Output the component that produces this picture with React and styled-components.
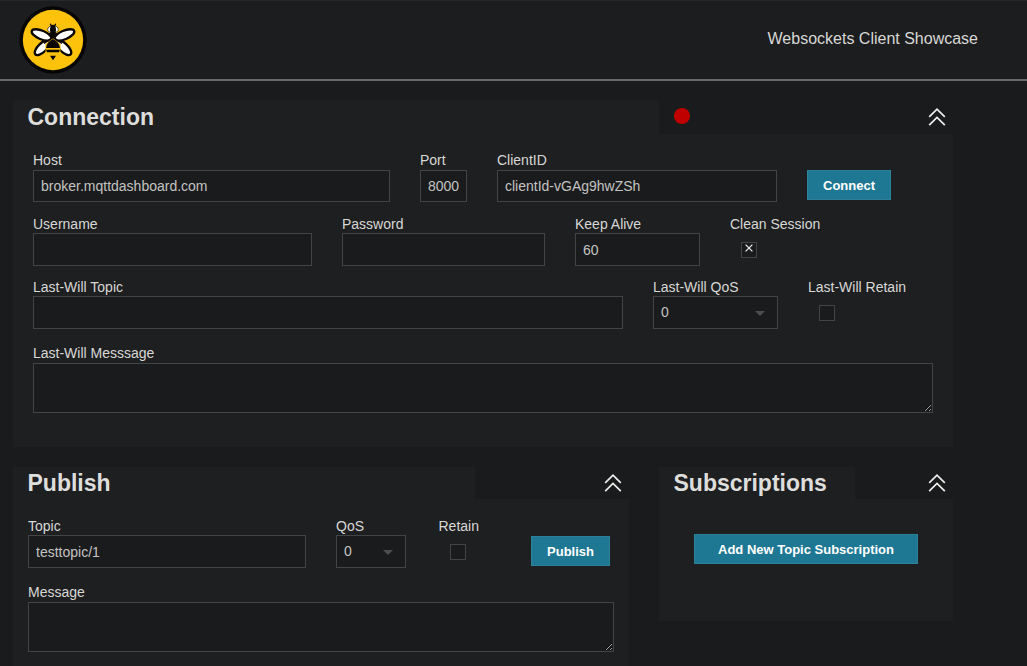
import React from "react";
import styled, { createGlobalStyle } from "styled-components";

const GlobalStyle = createGlobalStyle`
  * { box-sizing: border-box; }
  html, body { margin: 0; height: 666px; overflow: hidden; }
  body {
    background: #1a1b1d;
    color: #d8d8d5;
    font: 14px/20px "Liberation Sans", Arial, sans-serif;
  }
`;

const Header = styled.header`
  display: flex;
  align-items: flex-start;
  justify-content: space-between;
  height: 81px;
  padding: 5px 49px 0 19px;
  background: #1c1d1f;
  border-top: 1px solid #26282a;
  border-bottom: 2px solid #68696b;
`;

const Logo = styled.svg`
  display: block;
  width: 68px;
  height: 68px;
`;

const Tagline = styled.div`
  padding-top: 23px;
  font-size: 16px;
`;

const Main = styled.main`
  display: flex;
  flex-direction: column;
  gap: 20px;
  width: 940px;
  margin: 19px 0 0 13px;
`;

const Columns = styled.div`
  display: flex;
  align-items: flex-start;
  gap: 30px;
`;

const Panel = styled.section`
  width: ${(p) => p.$width}px;
`;

const PanelHead = styled.div`
  display: flex;
  align-items: stretch;
  height: ${(p) => p.$height}px;
`;

const HeadFill = styled.div`
  display: flex;
  flex: 1;
  align-items: center;
  justify-content: space-between;
  padding: 0 7px 0 15px;
`;

const Title = styled.h3`
  display: flex;
  align-items: center;
  width: ${(p) => p.$width}px;
  margin: 0;
  padding-left: 14.5px;
  background: #1e1f21;
  color: #dededc;
  font-size: 23px;
  font-weight: bold;
`;

const PanelBody = styled.div`
  display: flex;
  flex-direction: column;
  height: ${(p) => p.$height}px;
  padding: ${(p) => p.$padding};
  background: #1e1f21;
`;

const StatusDot = styled.span`
  width: 16px;
  height: 16px;
  margin-bottom: 2px;
  border-radius: 50%;
  background: #c00000;
`;

const Collapse = styled.button`
  margin: 0 0 0 auto;
  padding: 0;
  border: 0;
  background: none;
  line-height: 0;
`;

const Row = styled.div`
  display: flex;
  align-items: flex-start;
  gap: 30px;
  margin-top: ${(p) => p.$top || 0}px;
`;

const Field = styled.label`
  display: flex;
  flex-direction: column;
  width: ${(p) => (p.$width ? `${p.$width}px` : "auto")};
  margin-left: ${(p) => p.$indent || 0}px;
  white-space: nowrap;
`;

const Caption = styled.span`
  height: ${(p) => p.$height || 20}px;
  line-height: ${(p) => (p.$height === 19 ? 21 : 20)}px;
`;

const controlStyle = `
  display: block;
  width: 100%;
  margin: 0;
  padding: 0 6px 0 7px;
  border: 1px solid #434446;
  border-radius: 0;
  outline: 0;
  background: #1a1b1d;
  color: #c3c3c1;
  font: 14px "Liberation Sans", Arial, sans-serif;
`;

const Input = styled.input`
  ${controlStyle}
  height: ${(p) => p.$height || 33}px;
`;

const TextArea = styled.textarea`
  ${controlStyle}
  height: 50px;
  resize: both;
  color-scheme: dark;
`;

const SelectWrap = styled.span`
  position: relative;
  display: block;
`;

const Select = styled.select`
  ${controlStyle}
  height: 33px;
  padding-bottom: 1px;
  appearance: none;
`;

const SelectArrow = styled.svg`
  position: absolute;
  top: 15px;
  right: 13px;
`;

const Check = styled.span`
  display: flex;
  align-items: flex-start;
  justify-content: center;
  width: 16px;
  height: 16px;
  margin: 9px 0 0 11px;
  padding-top: 1px;
  border: 1px solid #434446;
  background: #1a1b1d;
`;

const Button = styled.button`
  height: 30px;
  width: ${(p) => p.$width}px;
  margin: ${(p) => p.$margin};
  padding: 0;
  border: 1px solid #2d8199;
  background: #1f7893;
  color: #fff;
  font: bold 13px "Liberation Sans", Arial, sans-serif;
`;

function BeeLogo() {
  return (
    <Logo viewBox="57 18 204 204">
      <circle cx="159" cy="120" r="101" fill="#080604" />
      <circle cx="159" cy="120" r="90.5" fill="#fdc30c" />
      <g fill="#fff" stroke="#0a0703" strokeWidth="7">
        <ellipse cx="127" cy="143" rx="29" ry="13" transform="rotate(-44 127 143)" />
        <ellipse cx="191" cy="143" rx="29" ry="13" transform="rotate(44 191 143)" />
        <ellipse cx="125" cy="105" rx="32" ry="13" transform="rotate(23 125 105)" />
        <ellipse cx="193" cy="105" rx="32" ry="13" transform="rotate(-23 193 105)" />
      </g>
      <path d="M155 80 L151 71 M163 80 L167 71" stroke="#0a0703" strokeWidth="4" />
      <ellipse cx="159" cy="88" rx="16" ry="11" fill="#fff" stroke="#0a0703" strokeWidth="2" />
      <ellipse cx="159" cy="89" rx="9" ry="15" fill="#0a0703" />
      <path d="M143 101 Q159 92 175 101 L164 116 H154Z" fill="#0a0703" />
      <path d="M159 113 L182 133 L181 163 H137 L136 133Z" fill="#fdc30c" />
      <path d="M159 117 Q178 126 180 144 H138 Q140 126 159 117Z" fill="#0a0703" />
      <path d="M132 130 L159 112 L186 130" fill="none" stroke="#0a0703" strokeWidth="5" />
      <path d="M138 149 H180 L177 157 H141Z" fill="#0a0703" />
      <path d="M150 167 H168 L159 181Z" fill="#0a0703" />
    </Logo>
  );
}

function CollapseButton() {
  return (
    <Collapse aria-label="Collapse">
      <svg width="18" height="18" viewBox="0 0 18 18" fill="none" stroke="#ededeb" strokeWidth="1.7">
        <path d="M1.2 8.9 9 1.2 16.8 8.9 M1.2 17.1 9 9.4 16.8 17.1" />
      </svg>
    </Collapse>
  );
}

function PanelHeader({ title, width, height = 32, status }) {
  return (
    <PanelHead $height={height}>
      <Title $width={width}>{title}</Title>
      <HeadFill>
        {status && <StatusDot />}
        <CollapseButton />
      </HeadFill>
    </PanelHead>
  );
}

function TextField({ label, width, value = "", caption, height }) {
  return (
    <Field $width={width}>
      <Caption $height={caption}>{label}</Caption>
      <Input $height={height} defaultValue={value} spellCheck={false} />
    </Field>
  );
}

function QosField({ label, width }) {
  return (
    <Field $width={width}>
      <Caption $height={19}>{label}</Caption>
      <SelectWrap>
        <Select defaultValue="0">
          <option>0</option>
          <option>1</option>
          <option>2</option>
        </Select>
        <SelectArrow width="10" height="5" viewBox="0 0 10 5">
          <path d="M0 0H10L5 5Z" fill="#4c4d4f" />
        </SelectArrow>
      </SelectWrap>
    </Field>
  );
}

function CheckField({ label, checked, indent }) {
  return (
    <Field $indent={indent}>
      <Caption $height={19}>{label}</Caption>
      <Check role="checkbox" aria-checked={!!checked}>
        {checked && (
          <svg width="8" height="8" viewBox="0 0 8 8" stroke="#e8e8e6" strokeWidth="1.3">
            <path d="M0.6 0.6 7.4 7.4 M7.4 0.6 0.6 7.4" />
          </svg>
        )}
      </Check>
    </Field>
  );
}

export default function App() {
  return (
    <>
      <GlobalStyle />
      <Header>
        <BeeLogo />
        <Tagline>Websockets Client Showcase</Tagline>
      </Header>
      <Main>
        <Panel $width={940}>
          <PanelHeader title="Connection" width={646} height={34} status />
          <PanelBody $height={313} $padding="16px 20px 0">
            <Row>
              <TextField label="Host" width={357} height={32} value="broker.mqttdashboard.com" />
              <TextField label="Port" width={47} height={32} value="8000" />
              <TextField label="ClientID" width={280} height={32} value="clientId-vGAg9hwZSh" />
              <Button $width={84} $margin="20px 0 0">Connect</Button>
            </Row>
            <Row $top={12}>
              <TextField label="Username" width={279} caption={19} />
              <TextField label="Password" width={203} caption={19} />
              <TextField label="Keep Alive" width={125} caption={19} value="60" />
              <CheckField label="Clean Session" checked />
            </Row>
            <Row $top={11}>
              <TextField label="Last-Will Topic" width={590} caption={19} />
              <QosField label="Last-Will QoS" width={125} />
              <CheckField label="Last-Will Retain" />
            </Row>
            <Row $top={14}>
              <Field $width={900}>
                <Caption>Last-Will Messsage</Caption>
                <TextArea />
              </Field>
            </Row>
          </PanelBody>
        </Panel>
        <Columns>
          <Panel $width={616}>
            <PanelHeader title="Publish" width={462} />
            <PanelBody $height={182} $padding="17px 15px 0">
              <Row>
                <TextField label="Topic" width={278} caption={19} value="testtopic/1" />
                <QosField label="QoS" width={70} />
                <CheckField label="Retain" indent={2.5} />
                <Button $width={79} $margin="20px 4px 0 auto">Publish</Button>
              </Row>
              <Row $top={14}>
                <Field $width={586}>
                  <Caption>Message</Caption>
                  <TextArea />
                </Field>
              </Row>
            </PanelBody>
          </Panel>
          <Panel $width={294}>
            <PanelHeader title="Subscriptions" width={196} />
            <PanelBody $height={122} $padding="35px 35px 0">
              <Button $width={224} $margin="0">Add New Topic Subscription</Button>
            </PanelBody>
          </Panel>
        </Columns>
      </Main>
    </>
  );
}
